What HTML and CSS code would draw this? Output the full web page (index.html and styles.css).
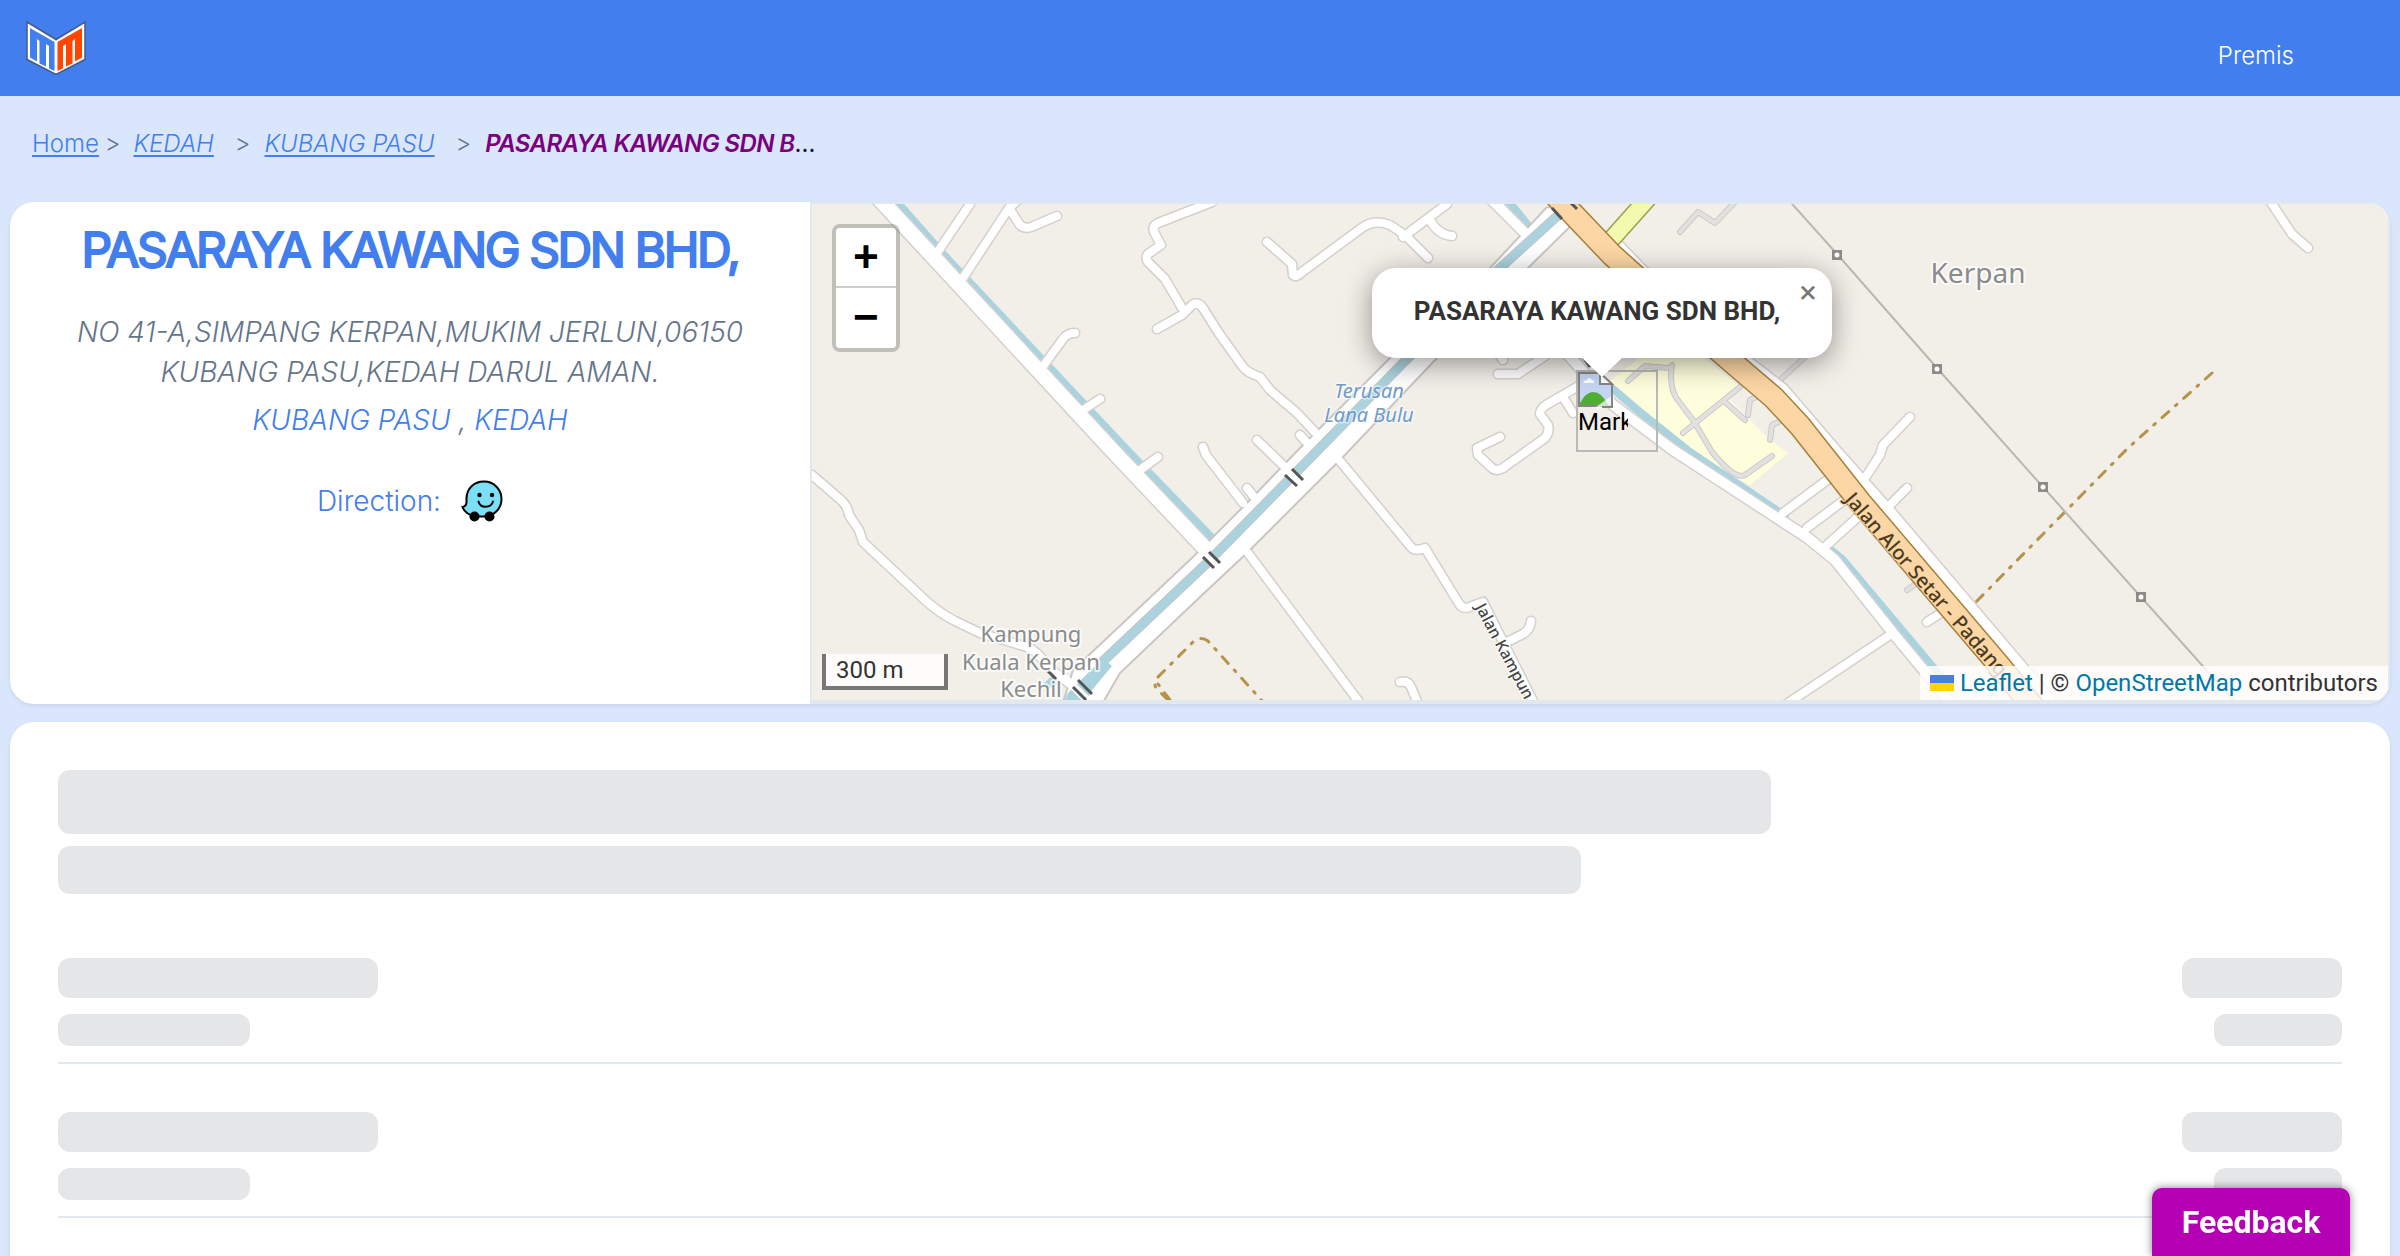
FILE: index.html
```html
<!DOCTYPE html>
<html lang="ms">
<head>
<meta charset="utf-8">
<meta name="viewport" content="width=device-width, initial-scale=1">
<title>PASARAYA KAWANG SDN BHD,</title>
<link rel="stylesheet" href="styles.css">
</head>
<body>
<header class="topbar">
  <a class="logo" href="#" aria-label="Home">
    <svg viewBox="0 0 60 54" width="60" height="54" aria-hidden="true">
      <path d="M1 1 30 18.500 59 1V38.500L30 53.500 1 38.500Z" fill="#fff" stroke="#475884" stroke-width="1.500"/>
      <path d="M4 7 28.500 21V50L23 47.500V25L20 23V45.500L13.500 42.500V20L11 18V40.500L4 36.500Z" fill="#427eed"/>
      <path d="M56 7 31.500 21V50L37 47.500V25L40 23V45.500L46.500 42.500V20L49 18V40.500L56 36.500Z" fill="#ff4500"/>
    </svg>
  </a>
  <nav class="topnav"><a href="#">Premis</a></nav>
</header>

<nav class="crumbs" aria-label="Breadcrumb">
  <a class="crumb-home" href="#">Home</a><span class="sep sep-first">&gt;</span>
  <a class="crumb" href="#">KEDAH</a><span class="sep">&gt;</span>
  <a class="crumb" href="#">KUBANG PASU</a><span class="sep">&gt;</span>
  <span class="current"><em>PASARAYA KAWANG SDN B</em>...</span>
</nav>

<main class="page">
  <section class="card premise">
    <div class="info">
      <h1>PASARAYA KAWANG SDN BHD,</h1>
      <p class="address">NO 41-A,SIMPANG KERPAN,MUKIM JERLUN,06150 KUBANG PASU,KEDAH DARUL AMAN.</p>
      <p class="area"><a href="#">KUBANG PASU</a> , <a href="#">KEDAH</a></p>
      <p class="direction"><span>Direction:</span>
        <a href="#" aria-label="Waze">
          <svg viewBox="0 0 42 42" width="42" height="42" aria-hidden="true">
            <path d="M23 1.500C12.500 1.500 5.500 9 5.500 18.500V22C5.500 25 4 26.500 1.500 27 3 31.500 8 35.500 14 36.500H23C33 36.500 40.500 28.500 40.500 19S33 1.500 23 1.500Z" fill="#7be0f5" stroke="#000" stroke-width="2"/>
            <circle cx="18.500" cy="15" r="2.200"/><circle cx="31" cy="15" r="2.200"/>
            <path d="M17.500 21.500C19 28.500 30 28.500 32 21.500" fill="none" stroke="#000" stroke-width="2" stroke-linecap="round"/>
            <circle cx="13.500" cy="36.500" r="5"/><circle cx="28.500" cy="36.500" r="5"/>
          </svg>
        </a>
      </p>
    </div>

    <div class="map">
      <svg class="tiles" viewBox="812 204 1576 496" preserveAspectRatio="xMidYMid slice" role="img" aria-label="Map">
        <defs>
          <g id="lanes">
            <path d="M937 253 970 204M963 278 1009 208 1018 200M1009 208 1020 225Q1024 229 1031 227L1057 216M1044 365 1063 339Q1067 333 1075 333M1083 410 1100 399M1140 470 1158 457"/>
            <path d="M1212 202 1158 223Q1152 226 1154 232L1161 245 1148 254Q1145 258 1148 262L1165 279 1182 308M1157 329 1182 315 1192 305Q1198 301 1203 308L1218 332 1243 367Q1248 373 1260 377L1270 390 1297 413 1325 443M1300 435 1310 446M1257 440 1290 472M1203 447 1206 455 1243 503M1247 488 1255 498"/>
            <path d="M1267 242 1292 264 1293 275Q1296 278 1302 272L1363 227Q1375 219 1390 225L1405 235 1428 258M1403 237 1447 204M1430 220Q1438 235 1452 236"/>
            <path d="M1335 455 1411 547Q1415 552 1425 548L1458 602Q1463 611 1472 606L1483 602 1535 705M1248 553 1362 706M1400 682Q1408 680 1411 687L1419 706M1507 642 1523 634Q1530 630 1531 621"/>
            <path d="M1500 437 1477 448 1478 455 1492 468Q1496 472 1503 468L1545 438Q1550 432 1548 425L1540 414Q1540 409 1546 405L1582 384M1563 397 1573 413M1498 374 1518 374 1545 356M1503 360 1496 350"/>
            <path d="M812 475 842 501Q848 507 849 515L859 530 863 542 925 600Q938 612 955 621L980 633 1027 647Q1040 653 1045 664L1087 698"/>
            <path d="M1865 478 1880 455 1883 445 1910 417M1888 507 1907 488M1783 513 1830 478M1807 528 1847 498M1827 545 1858 517M1927 622 1950 607M1893 633 1785 705M2268 198 2292 234 2308 248"/>
          </g>
          <path id="main-west" d="M875 194 952 277 1112 450 1218 562"/>
          <path id="canal-banks" d="M1547 207 1490 268 1390 358 1300 448 1243 507 1193 557 1073 670 1062 706H1101L1120 673 1200 597 1247 553 1343 457 1437 358 1528 268 1585 212Z"/>
          <path id="main-south" d="M1555 340 1612 404 1673 450 1808 538 1835 560 1893 633 1955 708"/>
          <path id="frontage" d="M1616 243 1640 268 1743 358 1783 389 1837 452 1893 515 2055 706M1490 198 1530 238"/>
          <path id="trunk" d="M1554 194 1612 255 1718 350 1774 398 1800 426 1860 502 1998 664 2034 708"/>
          <path id="service" d="M1672 365Q1668 390 1680 403L1693 420 1712 452Q1735 480 1745 475L1772 456M1683 433 1740 387M1628 381 1645 366 1670 368M1680 232 1698 212 1715 223 1735 202M1780 380 1805 357M1725 402 1745 420M1748 415 1750 400 1760 395M1770 440 1772 425 1783 420M1907 590 1917 583"/>
          <g id="pylon"><path d="M-5-5H5V5H-5Z" fill="#8d8b88"/><circle r="2.500" fill="#fff"/></g>
        </defs>
        <path class="land" d="M0 0H3200V1000H0Z"/>
        <path d="M1606 384 1650 350H1694L1740 387 1730 400 1767 437 1788 453 1750 485 1690 452Z" fill="#fefedc"/>
        <use href="#service" class="line service-case"/><use href="#service" class="line service"/>
        <g class="line water">
          <path d="M890 194 942 253 1127 450 1216 542M1600 378 1640 412 1690 452 1785 516M1825 545 1843 560 1943 679M1506 198 1530 228" stroke-width="8"/>
        </g>
        <use href="#lanes" class="line case" stroke-width="11"/>
        <use href="#main-west" class="line case" stroke-width="18"/>
        <use href="#main-south" class="line case" stroke-width="13"/>
        <use href="#frontage" class="line case" stroke-width="13"/>
        <use href="#canal-banks" fill="#fff" stroke="#c9c6c4" stroke-width="2"/>
        <use href="#lanes" class="line fill" stroke-width="8"/>
        <use href="#main-west" class="line fill" stroke-width="15"/>
        <use href="#main-south" class="line fill" stroke-width="10"/>
        <use href="#frontage" class="line fill" stroke-width="10"/>
        <path class="line" d="M1566 208 1500 268 1403 363 1318 450 1207 563 1100 664" stroke="#c9c6c4" stroke-width="10"/>
        <path class="line water" d="M1566 208 1500 268 1403 363 1318 450 1207 563 1100 664" stroke-width="8"/>
        <path d="M1062 706 1068 693 1085 676 1103 658 1112 666 1092 690 1083 706ZM1043 684 1052 676 1058 684 1048 690Z" fill="#aad3df"/>
        <g class="line fill" stroke-width="8"><path d="M1287 470 1303 487M1204 552 1220 568M1065 678 1090 703"/></g>
        <g fill="none" stroke="#555" stroke-width="3"><path d="M1285 475 1297 486M1292 469 1303 480M1203 557 1214 568M1209 552 1220 563M1078 680 1092 694M1073 687 1086 700M1048 671 1056 679M1580 353 1590 367"/></g>
        <path class="line" d="M1650 196 1609 242" stroke="#9aa04d" stroke-width="19"/>
        <path class="line" d="M1650 196 1609 242" stroke="#f3f9ae" stroke-width="16"/>
        <use href="#trunk" class="line" stroke="#a5813c" stroke-width="24"/>
        <use href="#trunk" class="line" stroke="#fcd6a4" stroke-width="21"/>
        <path d="M1552 208 1562 219M1571 203 1577 209" stroke="#555" stroke-width="3"/>
        <path class="track" d="M1168 700 1156 688Q1153 682 1158 677L1192 643Q1200 635 1208 641L1264 703M1170 700 1158 684M2212 373 2128 448 1973 605"/>
        <path d="M1785 196 1837 254 1937 368 2043 487 2141 597 2235 702" fill="none" stroke="#bab7b2" stroke-width="2"/>
        <use href="#pylon" x="1837" y="255"/><use href="#pylon" x="1937" y="369"/><use href="#pylon" x="2043" y="487"/><use href="#pylon" x="2141" y="597"/>
        <g class="place">
          <text x="1978" y="283" font-size="28">Kerpan</text>
          <g font-size="22"><text x="1031" y="642">Kampung</text><text x="1031" y="670">Kuala Kerpan</text><text x="1031" y="697">Kechil</text></g>
        </g>
        <g class="canal-name"><text x="1369" y="398">Terusan</text><text x="1369" y="422">Lana Bulu</text></g>
        <text class="road-name" transform="translate(1844 500) rotate(49)" font-size="20">Jalan Alor Setar - Padang</text>
        <text class="road-name lane-name" transform="translate(1475 607) rotate(62)" font-size="16">Jalan Kampun</text>
      </svg>

      <div class="marker" role="img" aria-label="Marker">
        <svg viewBox="0 0 36 36" width="36" height="36" aria-hidden="true">
          <path d="M1 1H22L34 13V34H1Z" fill="#c5d5f5" stroke="#858585" stroke-width="2"/>
          <path d="M22 1V12H34Z" fill="#fff" stroke="#858585" stroke-width="2"/>
          <path d="M5 11Q6 8 9 8 11 4 14 8 17 9 16 11Z" fill="#fff"/>
          <path d="M2 31Q8 20 15 20 24 20 30 33H2Z" fill="#4fae32"/>
          <path d="M18 35 36 22V36H18Z" fill="#fff" opacity=".7"/><path d="M24 35H34V22" fill="none" stroke="#858585" stroke-width="2"/>
        </svg>
        <span>Marker</span>
      </div>
      <div class="popup">
        <strong>PASARAYA KAWANG SDN BHD,</strong>
        <button class="popup-close" type="button" aria-label="Close">×</button>
      </div>
      <div class="zoom">
        <button type="button" aria-label="Zoom in">+</button>
        <button type="button" aria-label="Zoom out">−</button>
      </div>
      <div class="scale">300 m</div>
      <div class="attribution">
        <a href="#"><svg viewBox="0 0 24 16" width="24" height="16" aria-hidden="true"><path fill="#4c7be1" d="M0 0h24v8H0z"/><path fill="#ffd500" d="M0 8h24v8H0z"/></svg> Leaflet</a> | © <a href="#">OpenStreetMap</a> contributors
      </div>
    </div>
  </section>

  <section class="card loading" aria-busy="true">
    <div class="bone bone-title"></div>
    <div class="bone bone-subtitle"></div>
    <div class="rows">
      <div class="row"><div class="col"><div class="bone name"></div><div class="bone detail"></div></div><div class="col end"><div class="bone price"></div><div class="bone date"></div></div></div>
      <div class="row"><div class="col"><div class="bone name"></div><div class="bone detail"></div></div><div class="col end"><div class="bone price"></div><div class="bone date"></div></div></div>
    </div>
  </section>
</main>
<button class="feedback" type="button">Feedback</button>
</body>
</html>
```
FILE: styles.css
```css
* { box-sizing: border-box; }
body {
  display: flex;
  flex-direction: column;
  margin: 0;
  min-height: 100vh;
  background: #d9e6fc;
  color: #0f172a;
  font: 300 24px/32px Inter, "Liberation Sans", sans-serif;
}
h1, p { margin: 0; }
a { color: #427eed; text-decoration: none; }
button { font: inherit; border: 0; padding: 0; cursor: pointer; }

.topbar {
  display: flex;
  align-items: center;
  justify-content: space-between;
  height: 96px;
  padding: 0 106px 0 26px;
  background: #427eed;
}
.logo svg { display: block; }
.topnav { padding-top: 16px; }
.topnav a { color: #fff; }

.crumbs {
  display: flex;
  align-items: center;
  height: 106px;
  padding: 0 32px 10px;
}
.crumbs a { text-decoration: underline; text-decoration-thickness: 2px; text-underline-offset: 3px; }
.crumb { font-style: italic; }
.sep { color: #64748b; margin: 0 14px 0 21px; }
.sep-first { margin: 0 13px 0 6px; }
.current em { color: #7b007b; font-weight: 600; letter-spacing: -0.025em; }
.current { font-weight: 400; }

.page { flex: 1; display: flex; flex-direction: column; gap: 18px; padding: 0 10px; }
.card { background: #fff; border-radius: 24px; box-shadow: 0 2px 4px rgba(15, 23, 42, .08); }

.premise { display: grid; grid-template-columns: 800px 1fr; overflow: hidden; }
.info { display: flex; flex-direction: column; align-items: center; padding: 20px 48px; text-align: center; font-size: 28px; line-height: 40px; }
.info h1 { color: #427eed; font-size: 48px; font-weight: 400; -webkit-text-stroke: 2px #427eed; line-height: 56px; letter-spacing: -0.05em; }
.address, .area { color: #64748b; font-style: italic; }
.address { margin-top: 34px; }
.area { margin-top: 8px; }
.direction { display: flex; align-items: center; gap: 20px; margin-top: 40px; color: #427eed; }
.direction svg { display: block; }

.map { position: relative; height: 502px; border: 2px solid #e2e8f0; border-bottom-width: 4px; overflow: hidden; font-family: Roboto, sans-serif; font-weight: 400; }
.tiles { position: absolute; inset: 0; width: 100%; height: 100%; }
.land { fill: #f2efe9; }
.line { fill: none; stroke-linecap: round; stroke-linejoin: round; }
.case { stroke: #d3d0cd; }
.fill { stroke: #fff; }
.water { stroke: #aad3df; }
.service-case { stroke: #cbcaca; stroke-width: 6px; }
.service { stroke: #e2e1e0; stroke-width: 4px; }
.track { fill: none; stroke: #b6924a; stroke-width: 3px; stroke-linecap: round; stroke-dasharray: 9 9 2 9; }
.tiles text { font-family: "Noto Sans", sans-serif; paint-order: stroke; stroke-linejoin: round; }
.place { fill: #8b8b8b; stroke: rgba(255, 255, 255, .7); stroke-width: 4px; text-anchor: middle; }
.canal-name { fill: #6f9bcb; stroke: rgba(255, 255, 255, .5); stroke-width: 3px; text-anchor: middle; font-size: 20px; font-style: italic; }
.road-name { fill: #4a3b22; stroke: #fcd6a4; stroke-width: 2px; font-weight: 500; }
.lane-name { fill: #444; stroke: #fff; }

.marker { position: absolute; left: calc(50% - 24px); top: 166px; width: 82px; height: 82px; border: 2px solid #b9b9b5; color: #000; line-height: 28px; }
.marker svg { display: block; }
.marker span { display: block; width: 50px; overflow: hidden; }
.popup { position: absolute; left: calc(50% - 228px); top: 64px; display: grid; place-items: center; width: 460px; height: 90px; padding: 0 10px 4px 0; border-radius: 24px; background: #fff; color: #333; box-shadow: 0 6px 28px rgba(0, 0, 0, .4); font-size: 26px; }
.popup::after { content: ""; position: absolute; top: 100%; left: calc(50% - 20px); width: 0; border: 20px solid transparent; border-top: 19px solid #fff; border-bottom: 0; }
.popup-close { position: absolute; top: 0; right: 0; width: 48px; height: 48px; background: none; color: #757575; font: 32px/48px Roboto, sans-serif; }
.zoom { position: absolute; left: 20px; top: 20px; display: flex; flex-direction: column; border: 4px solid rgba(0, 0, 0, .2); border-radius: 8px; background-clip: padding-box; }
.zoom button { width: 60px; height: 60px; padding-top: 4px; background: #fff; color: #000; font: bold 44px/56px "Liberation Mono", monospace; border-radius: 0 0 4px 4px; }
.zoom button:first-child { border-bottom: 2px solid #ccc; border-radius: 4px 4px 0 0; }
.scale { position: absolute; left: 10px; bottom: 10px; width: 126px; height: 36px; padding: 0 10px; border: 4px solid #777; border-top: 0; background: rgba(255, 255, 255, .8); color: #333; line-height: 32px; }
.attribution { position: absolute; right: 0; bottom: 0; padding: 0 10px; background: rgba(255, 255, 255, .8); color: #333; line-height: 34px; white-space: nowrap; }
.attribution a { color: #0078a8; }

.loading { flex: 1; padding: 48px 48px 0; border-radius: 24px 24px 0 0; }
.bone { border-radius: 12px; background: #e5e6e8; }
.bone-title { width: 75%; height: 64px; }
.bone-subtitle { width: 66.667%; height: 48px; margin-top: 12px; }
.rows { display: flex; flex-direction: column; gap: 48px; margin-top: 64px; }
.row { display: flex; justify-content: space-between; padding-bottom: 16px; border-bottom: 2px solid #e2e8f0; }
.col { display: flex; flex-direction: column; gap: 16px; }
.end { align-items: flex-end; }
.name { width: 320px; height: 40px; }
.detail { width: 192px; height: 32px; }
.price { width: 160px; height: 40px; }
.date { width: 128px; height: 32px; }

.feedback { position: fixed; right: 50px; bottom: 0; width: 198px; height: 68px; border-radius: 10px 10px 0 0; background: #b500b5; color: #fff; font: bold 32px/64px Roboto, sans-serif; box-shadow: 0 0 8px rgba(0, 0, 0, .5); }
```
